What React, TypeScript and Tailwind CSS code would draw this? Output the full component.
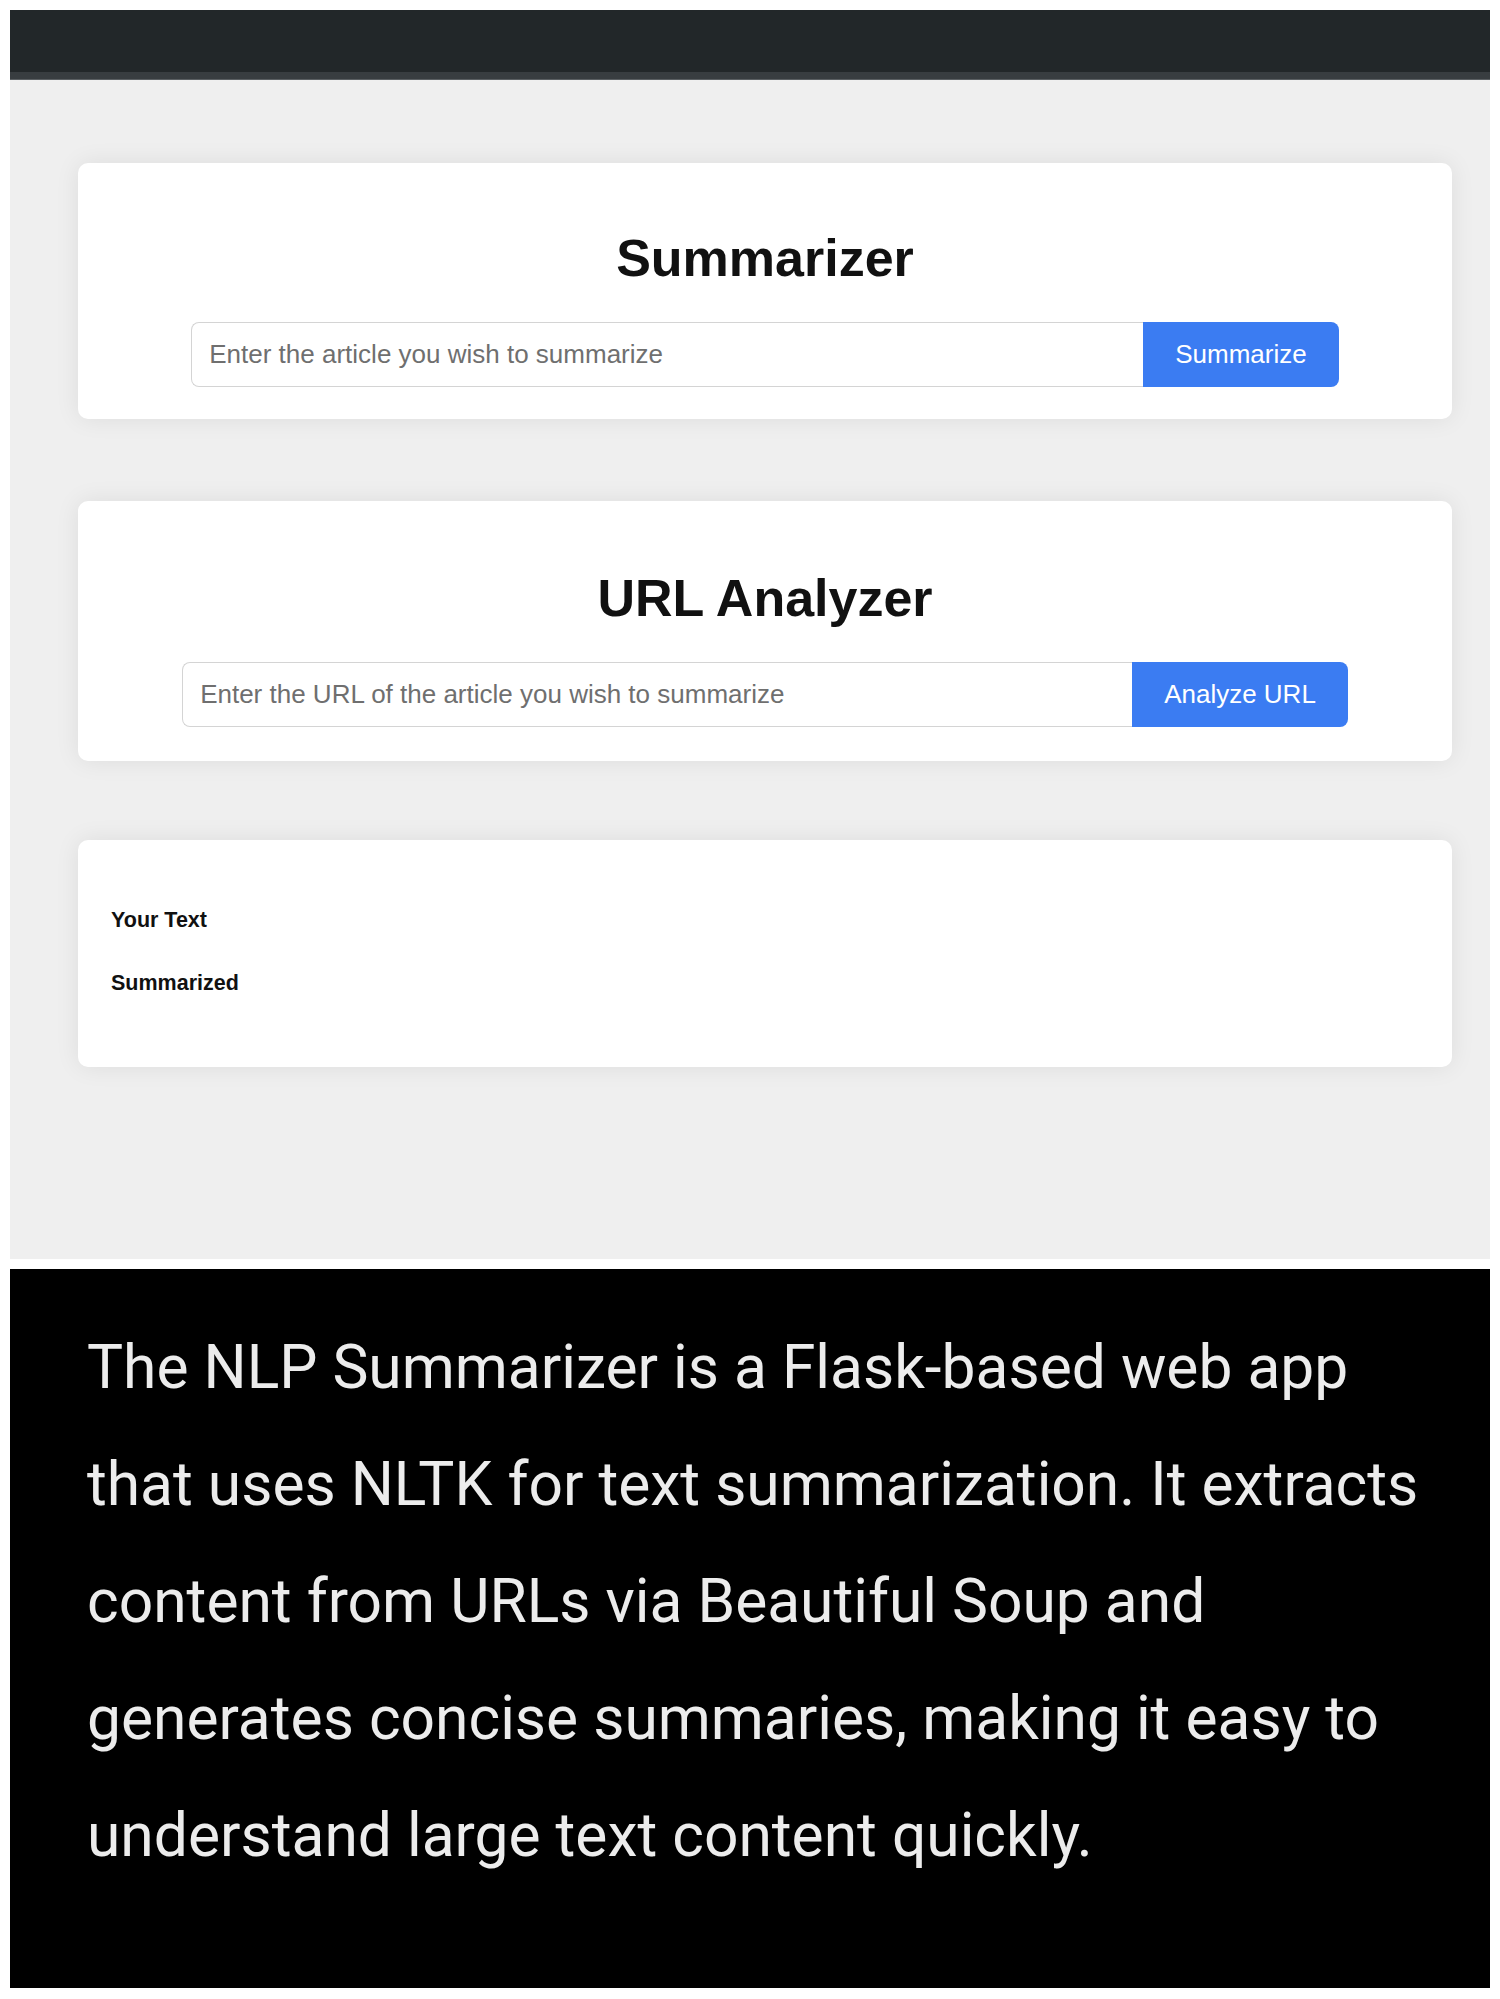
import React from "react";

/** 单个输入卡片：标题 + 输入框 + 按钮 */
function InputCard({
  title,
  placeholder,
  action,
  inputWidth,
  spacing,
}: {
  title: string;
  placeholder: string;
  action: string;
  inputWidth: string;
  spacing: string;
}) {
  return (
    <div className={`rounded-[10px] bg-white px-8 shadow-[0_0_24px_rgba(0,0,0,0.08)] ${spacing}`}>
      <h1 className="text-center text-[52px] leading-[59px] font-bold text-[#111]">{title}</h1>
      <div className="mt-[34px] flex justify-center">
        <input
          type="text"
          placeholder={placeholder}
          className={`${inputWidth} h-[65px] rounded-l-[8px] border border-r-0 border-[#d4d4d4] bg-white px-[17px] text-[26px] text-[#333] outline-none placeholder:text-[#6f6f6f]`}
        />
        <button className="h-[65px] rounded-r-[8px] bg-[#3b7cf2] px-[32px] text-[26px] text-white">
          {action}
        </button>
      </div>
    </div>
  );
}

export default function App() {
  return (
    <div className="min-h-[1999px] bg-white p-[10px] font-['Liberation_Sans',Arial,sans-serif]">
      {/* 顶部深色导航条 */}
      <div className="h-[70px] bg-[#222729]">
        <div className="h-[62px]" />
        <div className="h-[7px] bg-[#383d40]" />
        <div className="h-px bg-[#5a5f62]" />
      </div>

      <div className="flex h-[1179px] flex-col bg-[#efefef] pr-[38px] pl-[68px] pt-[83px]">
        <InputCard
          title="Summarizer"
          placeholder="Enter the article you wish to summarize"
          action="Summarize"
          inputWidth="w-[952px]"
          spacing="pt-[66px] pb-8"
        />
        <div className="h-[82px]" />
        <InputCard
          title="URL Analyzer"
          placeholder="Enter the URL of the article you wish to summarize"
          action="Analyze URL"
          inputWidth="w-[950px]"
          spacing="pt-[68px] pb-[34px]"
        />
        <div className="h-[79px]" />
        <div className="rounded-[10px] bg-white px-[33px] pt-[32px] pb-[33px] shadow-[0_0_24px_rgba(0,0,0,0.08)]">
          <p className="my-[36px] text-[21.5px] leading-[24px] font-bold text-[#111]">Your Text</p>
          <p className="my-[39px] text-[21.5px] leading-[24px] font-bold text-[#111]">Summarized</p>
        </div>
      </div>

      {/* 下方说明区 */}
      <div className="mt-[10px] h-[719px] bg-black pl-[77px] pt-[40px] font-['Roboto',sans-serif] text-[60.5px] leading-[117px] text-[#ececec]">
        The NLP Summarizer is a Flask-based web app
        <br />
        that uses NLTK for text summarization. It extracts
        <br />
        content from URLs via Beautiful Soup and
        <br />
        generates concise summaries, making it easy to
        <br />
        understand large text content quickly.
      </div>
    </div>
  );
}
